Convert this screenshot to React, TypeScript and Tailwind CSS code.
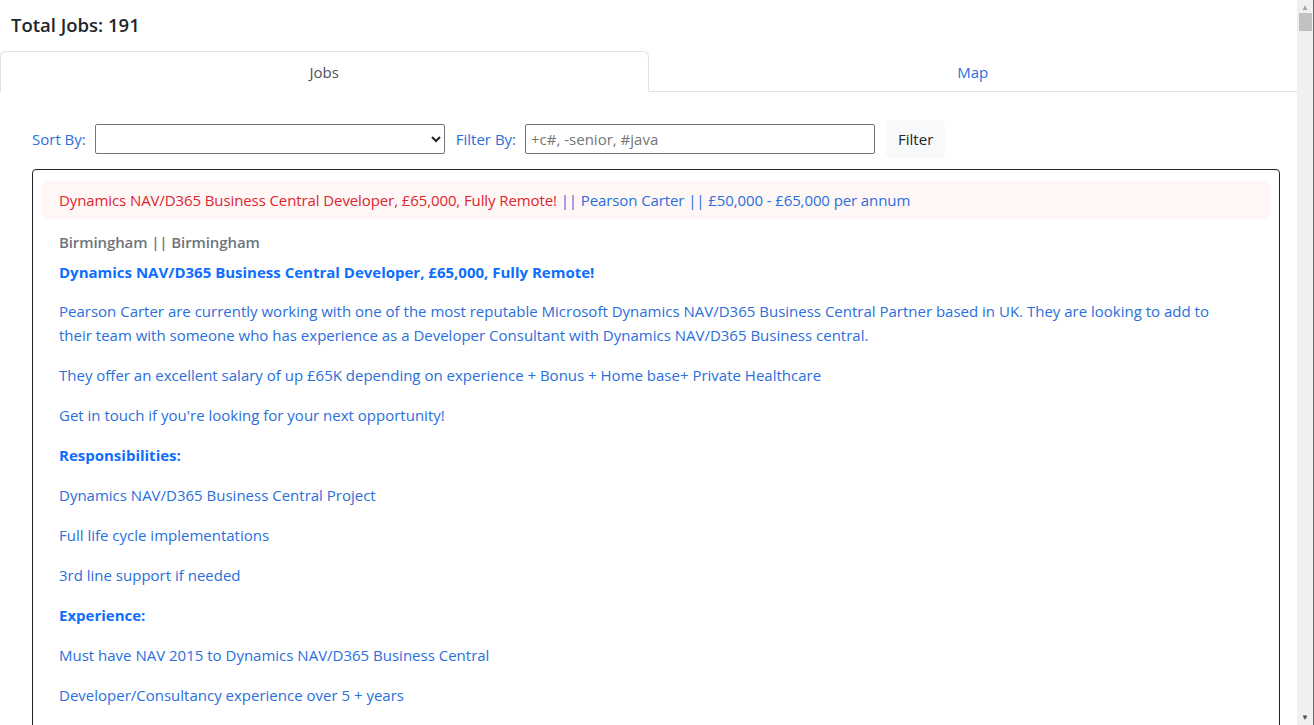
import React from "react";

const paragraphs = [
  "Pearson Carter are currently working with one of the most reputable Microsoft Dynamics NAV/D365 Business Central Partner based in UK. They are looking to add to their team with someone who has experience as a Developer Consultant with Dynamics NAV/D365 Business central.",
  "They offer an excellent salary of up £65K depending on experience + Bonus + Home base+ Private Healthcare",
  "Get in touch if you're looking for your next opportunity!",
];

const responsibilities = [
  "Dynamics NAV/D365 Business Central Project",
  "Full life cycle implementations",
  "3rd line support if needed",
];

const experience = [
  "Must have NAV 2015 to Dynamics NAV/D365 Business Central",
  "Developer/Consultancy experience over 5 + years",
];

export default function App() {
  return (
    <div
      className="flex h-screen overflow-hidden bg-white text-[16px] leading-6 text-[#212529]"
      style={{ fontFamily: '"Open Sans", "Noto Sans", Arial, sans-serif' }}
    >
      <div className="flex-1 min-w-0">
        {/* Header */}
        <div className="px-[11px] pt-[12px] pb-[14px]">
          <h5 className="text-[18.5px] font-semibold leading-[25px] text-[#212529]">
            Total Jobs: 191
          </h5>
        </div>

        {/* Tabs */}
        <ul className="flex border-b border-[#dee2e6]">
          <li className="flex-1 -mb-px">
            <button className="w-full h-[41px] border border-[#dee2e6] border-b-white rounded-t-md bg-white text-[#495057] text-[15px]">
              Jobs
            </button>
          </li>
          <li className="flex-1 -mb-px">
            <button className="w-full h-[41px] border border-transparent text-[#2a6fdb] text-[15px]">
              Map
            </button>
          </li>
        </ul>

        <div className="pl-[32px] pr-[17px] pt-[28px]">
          {/* Sort / filter row */}
          <div className="flex items-center text-[15px]">
            <label className="text-[#2a6fdb] mr-[9px]">Sort By:</label>
            <select className="w-[350px] h-[30px] border border-[#767676] rounded-[2px] bg-white px-1 text-[15px]">
              <option></option>
            </select>
            <label className="text-[#2a6fdb] ml-[11px] mr-[9px]">Filter By:</label>
            <input
              type="text"
              placeholder="+c#, -senior, #java"
              className="w-[350px] h-[30px] border border-[#767676] rounded-[2px] px-[5px] text-[15px] placeholder:text-[#757575] outline-none"
            />
            <button className="ml-[11px] h-[38px] px-[12px] rounded-md bg-[#f8f9fa] text-[#212529] text-[15px]">
              Filter
            </button>
          </div>

          {/* Job card */}
          <div className="mt-[11px] border border-[#212529] rounded-[4px] px-[9px] pt-[11px] pb-16 text-[15px]">
            <div className="bg-[#fff6f6] px-[17px] py-[7px] leading-6 tracking-[-0.1px]">
              <span className="text-[#dc2630]">
                Dynamics NAV/D365 Business Central Developer, £65,000, Fully Remote!
              </span>
              <span className="text-[#2a6fdb]"> || Pearson Carter || £50,000 - £65,000 per annum</span>
            </div>

            <div className="pl-[17px] pr-[27px]">
              <div className="mt-[11px] font-semibold text-[#6c757d] tracking-[-0.1px]">
                Birmingham || Birmingham
              </div>
              <div className="mt-[6px] font-bold text-[#0d6efd]">
                Dynamics NAV/D365 Business Central Developer, £65,000, Fully Remote!
              </div>
              <div className="mt-[15px] text-[#2a6fdb]">
                {paragraphs.map((p) => (
                  <p key={p} className="mb-4">
                    {p}
                  </p>
                ))}
                <p className="mb-4 font-bold text-[#0d6efd]">Responsibilities:</p>
                {responsibilities.map((p) => (
                  <p key={p} className="mb-4">
                    {p}
                  </p>
                ))}
                <p className="mb-4 font-bold text-[#0d6efd]">Experience:</p>
                {experience.map((p) => (
                  <p key={p} className="mb-4">
                    {p}
                  </p>
                ))}
              </div>
            </div>
          </div>
        </div>
      </div>

      {/* Window scrollbar */}
      <div className="w-[17px] shrink-0 flex flex-col items-center bg-[#f0f0f0] border-r border-[#6b6b6b]">
        <div className="h-[13px] flex items-center justify-center text-[8px] leading-none text-[#a3a3a3]">▲</div>
        <div className="w-[13px] h-[18px] bg-[#c1c1c1]" />
        <div className="flex-1" />
        <div className="h-[17px] flex items-center justify-center text-[8px] leading-none text-[#505050]">▼</div>
      </div>
    </div>
  );
}
